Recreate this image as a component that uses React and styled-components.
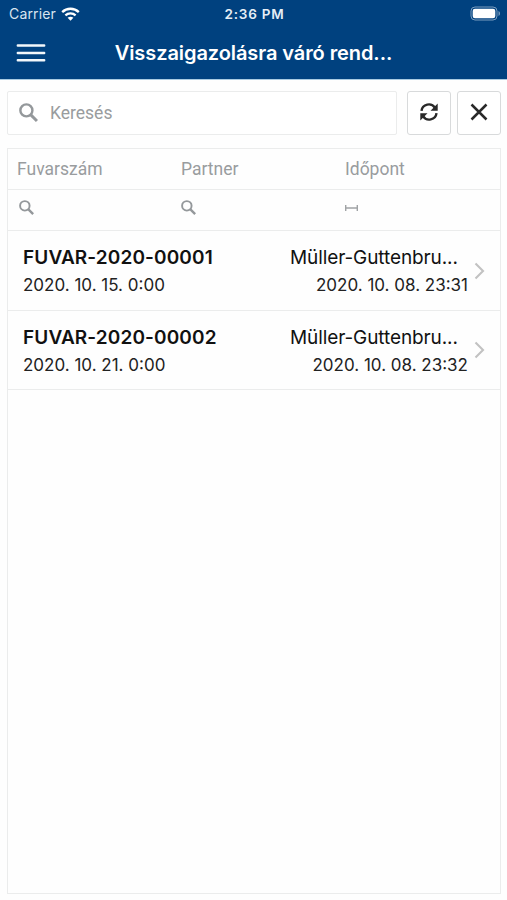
import React from 'react';
import styled, { createGlobalStyle } from 'styled-components';

const colorHeader = '#00417f';
const colorBorder = '#ebecec';
const colorMuted = '#999c9e';
const fontSystem = "Inter, 'Liberation Sans', sans-serif";
const fontGrid = "Roboto, 'Liberation Sans', sans-serif";

const GlobalStyle = createGlobalStyle`
    * {
        box-sizing: border-box;
    }
    body {
        margin: 0;
        background: #fefefe;
        font-family: ${fontSystem};
    }
`;

const Screen = styled('div')`
    display: flex;
    flex-direction: column;
    height: 900px;
    overflow: hidden;
`;

const Header = styled('header')`
    height: 80px;
    flex: none;
    border-bottom: 1px solid #a9cbe2;
    background: ${colorHeader};
    color: white;
`;

const StatusBar = styled('div')`
    display: grid;
    grid-template-columns: 1fr auto 1fr;
    align-items: center;
    height: 27px;
    padding: 0 6px 0 9px;
    font-size: 13.5px;
`;

const Carrier = styled('div')`
    display: flex;
    align-items: center;
    gap: 5px;
    color: #d9e5f0;
    font-size: 14px;
    letter-spacing: 0.15px;
`;

const Clock = styled('div')`
    margin-left: -1px;
    font-weight: 600;
    letter-spacing: 0.75px;
    color: #e6eef6;
`;

const Battery = styled('svg')`
    justify-self: end;
`;

const NavBar = styled('div')`
    display: grid;
    grid-template-columns: 60px 1fr 60px;
    align-items: center;
    height: 52px;
`;

const MenuButton = styled('button')`
    display: flex;
    padding: 0 0 0 16px;
    border: 0;
    background: none;
`;

const Title = styled('h1')`
    margin: 0;
    font-size: 20px;
    font-weight: 600;
    line-height: 24px;
    text-align: center;
    white-space: nowrap;
    letter-spacing: -0.08px;
`;

const Toolbar = styled('div')`
    display: flex;
    padding: 11px 6px 13px 7px;
`;

const SearchBox = styled('div')`
    display: flex;
    align-items: center;
    gap: 12px;
    flex: 1;
    height: 44px;
    margin-right: 10px;
    padding: 0 11px 1px;
    border: 1px solid ${colorBorder};
    border-radius: 2px;
    background: white;
    color: ${colorMuted};
    font-family: ${fontGrid};
    font-size: 17.5px;
`;

const ToolButton = styled('button')`
    display: flex;
    align-items: center;
    justify-content: center;
    width: 44px;
    height: 44px;
    padding: 0 0 2px;
    border: 1px solid #d8dadb;
    border-radius: 3px;
    background: white;
    & + & {
        margin-left: 6px;
    }
`;

const Grid = styled('main')`
    flex: 1;
    margin: 0 6px 6px 7px;
    border: 1px solid ${colorBorder};
`;

const GridRow = styled('div')`
    display: grid;
    grid-template-columns: 164px 164px 1fr;
    align-items: center;
    height: 41px;
    padding: 0 0 ${(props) => props.$lift}px 9px;
    border-bottom: 1px solid ${colorBorder};
    color: ${colorMuted};
    font-family: ${fontGrid};
    font-size: 17.5px;
`;

const FilterCell = styled('div')`
    display: flex;
    padding-left: ${(props) => props.$indent}px;
`;

const Order = styled('div')`
    display: flex;
    align-items: center;
    height: ${(props) => props.$height}px;
    padding: 0 15px 0 15px;
    border-bottom: 1px solid ${colorBorder};
    color: #111;
`;

const OrderColumn = styled('div')`
    flex: 1;
    padding-top: 2px;
`;

const OrderAside = styled('div')`
    width: 178px;
    margin-right: 6px;
    padding-top: 2px;
`;

const OrderNumber = styled('div')`
    font-size: 19px;
    font-weight: 600;
    line-height: 28px;
    letter-spacing: 0.12px;
`;

const Partner = styled('div')`
    font-size: 19px;
    line-height: 28px;
    letter-spacing: -0.1px;
    white-space: nowrap;
`;

const OrderDate = styled('div')`
    font-size: 17px;
    line-height: 27px;
    text-align: ${(props) => props.$align || 'left'};
    color: #222;
`;

const SearchIcon = ({ size }) => (
    <svg width={size} height={size} viewBox="0 0 18 18" fill="none" stroke="#94989b">
        <circle cx="7" cy="7" r="5.7" strokeWidth="2.3" />
        <path d="M11 11l6 6" strokeWidth="2.8" />
    </svg>
);

const WifiIcon = () => (
    <svg width="19" height="14" viewBox="0 0 19 14" fill="none" stroke="white" strokeWidth="2.3">
        <path d="M1.2 5.1C5.8.6 13.2.6 17.8 5.1" />
        <path d="M4.4 8.3C7.3 5.6 11.7 5.6 14.6 8.3" />
        <path d="M9.5 13.8l-2.9-3.1c1.7-1.4 4.1-1.4 5.8 0z" fill="white" stroke="none" />
    </svg>
);

const BatteryIcon = () => (
    <Battery width="31" height="15" viewBox="0 0 31 15">
        <rect x="1" y="1" width="26" height="13" rx="4" fill="none" stroke="#7b9dbf" />
        <rect x="2.7" y="2.8" width="22.6" height="9.4" rx="2.3" fill="white" />
        <path d="M28.5 5v5c2-.8 2-4.2 0-5z" fill="#7b9dbf" />
    </Battery>
);

const RefreshIcon = () => (
    <svg width="20" height="20" viewBox="0 0 20 20" fill="none" stroke="#292929" strokeWidth="2.4">
        <path d="M2.5 8.8C3.3 1.8 12.5.2 16 5.8" />
        <path d="M17.5 11.2C16.7 18.2 7.5 19.8 4 14.2" />
        <path d="M18.7 1.5v7.2h-7.2zM1.3 18.5v-7.2h7.2z" fill="#292929" stroke="none" />
    </svg>
);

const orders = [
    { number: 'FUVAR-2020-00001', date: '2020. 10. 15. 0:00', created: '2020. 10. 08. 23:31', height: 80 },
    { number: 'FUVAR-2020-00002', date: '2020. 10. 21. 0:00', created: '2020. 10. 08. 23:32', height: 79 },
];

const App = () => {
    return (
        <Screen>
            <GlobalStyle />
            <Header>
                <StatusBar>
                    <Carrier>
                        Carrier
                        <WifiIcon />
                    </Carrier>
                    <Clock>2:36 PM</Clock>
                    <BatteryIcon />
                </StatusBar>
                <NavBar>
                    <MenuButton>
                        <svg width="30" height="20" viewBox="0 0 30 20" stroke="#f2f7fb" strokeWidth="2.4">
                            <path d="M1.8 2.5h26.4M1.8 10h26.4M1.8 17.3h26.4" strokeLinecap="round" />
                        </svg>
                    </MenuButton>
                    <Title>Visszaigazolásra váró rend...</Title>
                </NavBar>
            </Header>
            <Toolbar>
                <SearchBox>
                    <SearchIcon size={19} />
                    <span>Keresés</span>
                </SearchBox>
                <ToolButton>
                    <RefreshIcon />
                </ToolButton>
                <ToolButton>
                    <svg width="18" height="18" viewBox="0 0 18 18" stroke="#292929" strokeWidth="2.5">
                        <path d="M1.5 1.5l15 15M16.5 1.5l-15 15" />
                    </svg>
                </ToolButton>
            </Toolbar>
            <Grid>
                <GridRow $lift={1}>
                    <div>Fuvarszám</div>
                    <div>Partner</div>
                    <div>Időpont</div>
                </GridRow>
                <GridRow $lift={5}>
                    <FilterCell $indent={2}>
                        <SearchIcon size={15} />
                    </FilterCell>
                    <FilterCell $indent={0}>
                        <SearchIcon size={15} />
                    </FilterCell>
                    <FilterCell $indent={0}>
                        <svg width="13" height="8" viewBox="0 0 13 8" fill="none" stroke="#a0a3a5" strokeWidth="1.4">
                            <path d="M.7 1v6M12.3 1v6M1 4h11" />
                        </svg>
                    </FilterCell>
                </GridRow>
                {orders.map((order) => (
                    <Order key={order.number} $height={order.height}>
                        <OrderColumn>
                            <OrderNumber>{order.number}</OrderNumber>
                            <OrderDate>{order.date}</OrderDate>
                        </OrderColumn>
                        <OrderAside>
                            <Partner>Müller-Guttenbru...</Partner>
                            <OrderDate $align="right">{order.created}</OrderDate>
                        </OrderAside>
                        <svg width="11" height="18" viewBox="0 0 11 18" fill="none" stroke="#c2c2c2" strokeWidth="2.1">
                            <path d="M1.5 1.5L9 9l-7.5 7.5" />
                        </svg>
                    </Order>
                ))}
            </Grid>
        </Screen>
    );
};

export default App;
